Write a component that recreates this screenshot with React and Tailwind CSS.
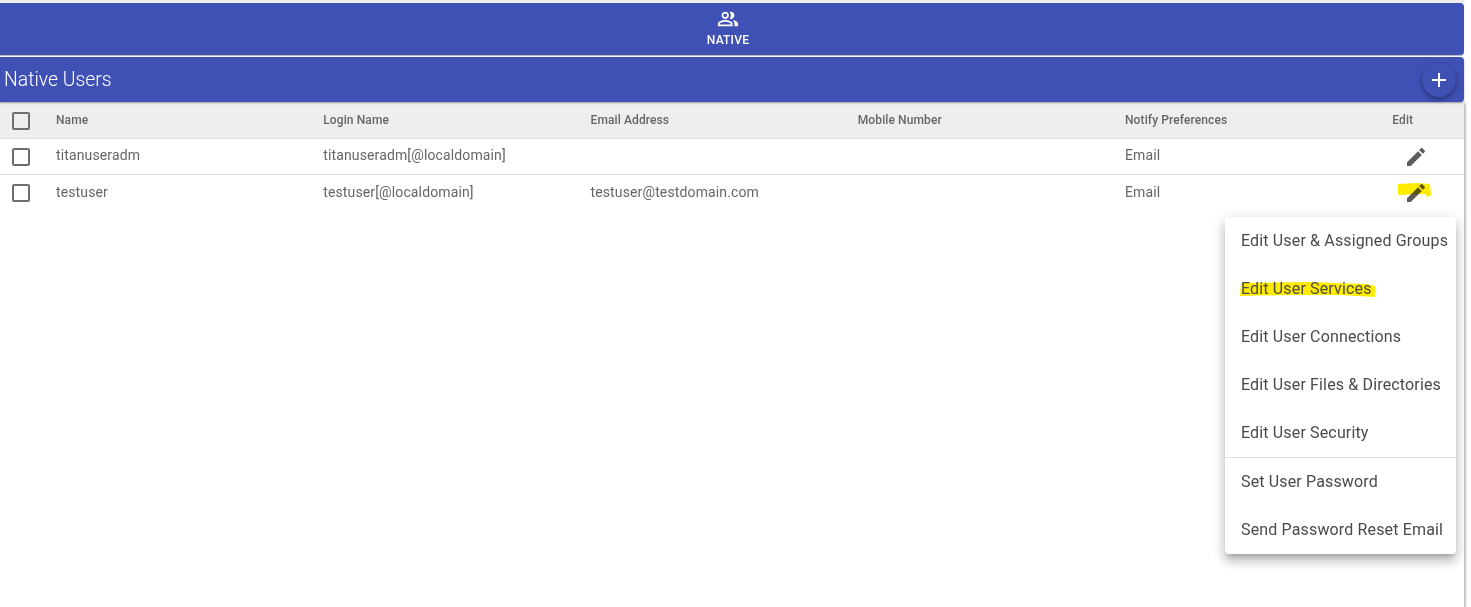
import React from "react";
import { MdEdit, MdAdd, MdOutlinePeopleAlt } from "react-icons/md";

const columns = "grid grid-cols-[56px_267.25px_267.25px_267.25px_267.25px_267.25px_1fr] items-center";

function Check() {
  return <span className="block w-[18px] h-[18px] ml-3 mt-[1px] border-2 border-[#6e6e6e] rounded-[2px]" />;
}

function Row({ cells, last }) {
  return (
    <div className={`${columns} h-9 border-b ${last ? "border-transparent" : "border-[#e0e0e0]"} text-[14px] tracking-[0.13px] text-[#666666]`}>
      <Check />
      {cells.map((c, i) => (
        <span key={i} className={`whitespace-nowrap ${last ? "pb-0" : "pb-[2px]"}`}>{c}</span>
      ))}
      <span className="pl-[12px] text-[#5c5c5c]"><MdEdit size={24} /></span>
    </div>
  );
}

const menu = [
  "Edit User & Assigned Groups",
  "Edit User Services",
  "Edit User Connections",
  "Edit User Files & Directories",
  "Edit User Security",
];

function Item({ children, mark }) {
  return (
    <div className="relative h-12 pl-4 flex items-center text-[16px] tracking-[0.15px] text-[#4a4a4a] whitespace-nowrap">
      {mark && (
        <svg className="absolute left-[15px] top-[17px] mix-blend-multiply" width="136" height="16" viewBox="0 0 136 16">
          <path d="M1 1 L70 0 L126 2 L135 4 L135 15 L100 13 L50 13 L0 14 Z" fill="#ffeb00" />
        </svg>
      )}
      <span className="relative">{children}</span>
    </div>
  );
}

export default function App() {
  return (
    <div className="relative h-[607px] overflow-hidden bg-white font-['Roboto',sans-serif]">
      <div className="h-[3px] w-[1465px] bg-[#eeeeee]" />
      <div className="w-[1464px] h-[52px] pr-2 rounded-r-[4px] bg-[#3f51b5] text-white flex flex-col items-center pt-[5px] shadow-[0_1px_1px_rgba(0,0,0,0.3)]">
        <MdOutlinePeopleAlt size={22} />
        <span className="text-[12px] font-medium leading-[14px] mt-[3px] tracking-[0.2px]">NATIVE</span>
      </div>
      <div className="w-[1464px] h-[45px] mt-[2px] rounded-r-[4px] bg-[#3f51b5] text-white flex items-center justify-between pl-1 pr-[8px] shadow-[0_1px_2px_rgba(0,0,0,0.35)] relative z-10">
        <span className="text-[19.4px] font-light leading-none">Native Users</span>
        <span className="w-[34px] h-[34px] rounded-full bg-[#3f51b5] flex items-center justify-center shadow-[0_2px_5px_rgba(0,0,0,0.4)]">
          <MdAdd size={24} />
        </span>
      </div>
      <div className="w-[1464px] h-[506px] bg-white shadow-[1px_1px_3px_rgba(0,0,0,0.4)]">
        <div className={`${columns} h-[37px] bg-[#eeeeee] border-b border-[#e0e0e0] text-[12px] tracking-[0.11px] font-medium text-[#666666]`}>
          <Check />
          <span>Name</span>
          <span>Login Name</span>
          <span>Email Address</span>
          <span>Mobile Number</span>
          <span>Notify Preferences</span>
          <span>Edit</span>
        </div>
        <Row cells={["titanuseradm", "titanuseradm[@localdomain]", "", "", "Email"]} />
        <Row last cells={["testuser", "testuser[@localdomain]", "testuser@testdomain.com", "", "Email"]} />
      </div>
      <svg className="absolute left-[1397px] top-[183px] mix-blend-multiply" width="36" height="16" viewBox="0 0 36 16">
        <path d="M1 1 L20 0 L33 1 L34 12 L31 14 L28 11 L1 12 Z" fill="#ffeb00" />
      </svg>
      <div className="absolute left-[1225px] top-[217px] w-[231px] h-[337px] bg-white rounded-[4px] shadow-[0_5px_5px_-3px_rgba(0,0,0,0.2),0_8px_10px_1px_rgba(0,0,0,0.14),0_3px_14px_2px_rgba(0,0,0,0.12)]">
        {menu.map((m, i) => (
          <Item key={m} mark={i === 1}>{m}</Item>
        ))}
        <div className="h-px bg-[#e0e0e0]" />
        <Item>Set User Password</Item>
        <Item>Send Password Reset Email</Item>
      </div>
    </div>
  );
}
